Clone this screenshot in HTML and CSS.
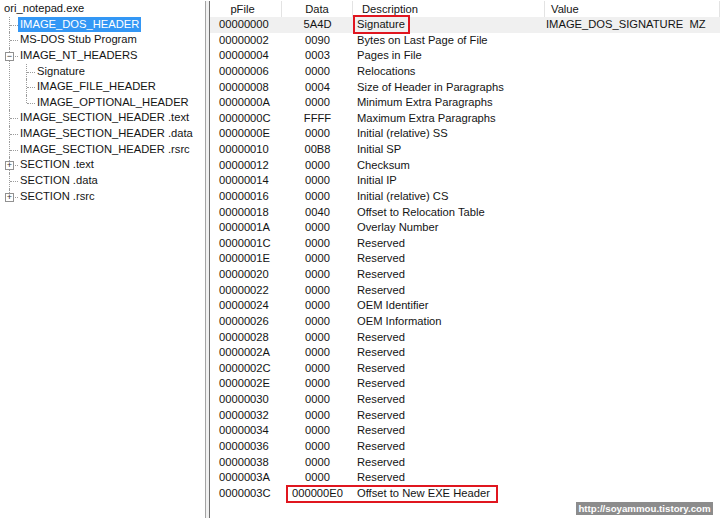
FILE: index.html
```html
<!DOCTYPE html>
<html>
    <head>
        <link rel="stylesheet" href="styles.css">
    </head>
    <body>
        <div class="window">
            <div class="treePane">
                <div class="root"><span class="label">ori_notepad.exe</span></div>
                <div class="branch">
                    <div class="node"><div class="line"><span class="label selected">IMAGE_DOS_HEADER</span></div></div>
                    <div class="node"><div class="line"><span class="label">MS-DOS Stub Program</span></div></div>
                    <div class="node">
                        <div class="line"><span class="toggle">&minus;</span><span class="label">IMAGE_NT_HEADERS</span></div>
                        <div class="branch sub">
                            <div class="node"><div class="line"><span class="label">Signature</span></div></div>
                            <div class="node"><div class="line"><span class="label">IMAGE_FILE_HEADER</span></div></div>
                            <div class="node last"><div class="line"><span class="label">IMAGE_OPTIONAL_HEADER</span></div></div>
                        </div>
                    </div>
                    <div class="node"><div class="line"><span class="label">IMAGE_SECTION_HEADER .text</span></div></div>
                    <div class="node"><div class="line"><span class="label">IMAGE_SECTION_HEADER .data</span></div></div>
                    <div class="node"><div class="line"><span class="label">IMAGE_SECTION_HEADER .rsrc</span></div></div>
                    <div class="node"><div class="line"><span class="toggle">+</span><span class="label">SECTION .text</span></div></div>
                    <div class="node"><div class="line"><span class="label">SECTION .data</span></div></div>
                    <div class="node last"><div class="line"><span class="toggle">+</span><span class="label">SECTION .rsrc</span></div></div>
                </div>
            </div>
            <div class="splitter"></div>
            <div class="listPane">
                <div class="head">
                    <div class="hFile">pFile</div>
                    <div class="hData">Data</div>
                    <div class="hDesc">Description</div>
                    <div class="hValue">Value</div>
                </div>
                <div class="row first">
                    <div class="cFile">00000000</div>
                    <div class="cData">5A4D</div>
                    <div class="cDesc"><span class="mark">Signature</span></div>
                    <div class="cValue">IMAGE_DOS_SIGNATURE  MZ</div>
                </div>
                <div class="row"><div class="cFile">00000002</div><div class="cData">0090</div><div class="cDesc">Bytes on Last Page of File</div><div class="cValue"></div></div>
                <div class="row"><div class="cFile">00000004</div><div class="cData">0003</div><div class="cDesc">Pages in File</div><div class="cValue"></div></div>
                <div class="row"><div class="cFile">00000006</div><div class="cData">0000</div><div class="cDesc">Relocations</div><div class="cValue"></div></div>
                <div class="row"><div class="cFile">00000008</div><div class="cData">0004</div><div class="cDesc">Size of Header in Paragraphs</div><div class="cValue"></div></div>
                <div class="row"><div class="cFile">0000000A</div><div class="cData">0000</div><div class="cDesc">Minimum Extra Paragraphs</div><div class="cValue"></div></div>
                <div class="row"><div class="cFile">0000000C</div><div class="cData">FFFF</div><div class="cDesc">Maximum Extra Paragraphs</div><div class="cValue"></div></div>
                <div class="row"><div class="cFile">0000000E</div><div class="cData">0000</div><div class="cDesc">Initial (relative) SS</div><div class="cValue"></div></div>
                <div class="row"><div class="cFile">00000010</div><div class="cData">00B8</div><div class="cDesc">Initial SP</div><div class="cValue"></div></div>
                <div class="row"><div class="cFile">00000012</div><div class="cData">0000</div><div class="cDesc">Checksum</div><div class="cValue"></div></div>
                <div class="row"><div class="cFile">00000014</div><div class="cData">0000</div><div class="cDesc">Initial IP</div><div class="cValue"></div></div>
                <div class="row"><div class="cFile">00000016</div><div class="cData">0000</div><div class="cDesc">Initial (relative) CS</div><div class="cValue"></div></div>
                <div class="row"><div class="cFile">00000018</div><div class="cData">0040</div><div class="cDesc">Offset to Relocation Table</div><div class="cValue"></div></div>
                <div class="row"><div class="cFile">0000001A</div><div class="cData">0000</div><div class="cDesc">Overlay Number</div><div class="cValue"></div></div>
                <div class="row"><div class="cFile">0000001C</div><div class="cData">0000</div><div class="cDesc">Reserved</div><div class="cValue"></div></div>
                <div class="row"><div class="cFile">0000001E</div><div class="cData">0000</div><div class="cDesc">Reserved</div><div class="cValue"></div></div>
                <div class="row"><div class="cFile">00000020</div><div class="cData">0000</div><div class="cDesc">Reserved</div><div class="cValue"></div></div>
                <div class="row"><div class="cFile">00000022</div><div class="cData">0000</div><div class="cDesc">Reserved</div><div class="cValue"></div></div>
                <div class="row"><div class="cFile">00000024</div><div class="cData">0000</div><div class="cDesc">OEM Identifier</div><div class="cValue"></div></div>
                <div class="row"><div class="cFile">00000026</div><div class="cData">0000</div><div class="cDesc">OEM Information</div><div class="cValue"></div></div>
                <div class="row"><div class="cFile">00000028</div><div class="cData">0000</div><div class="cDesc">Reserved</div><div class="cValue"></div></div>
                <div class="row"><div class="cFile">0000002A</div><div class="cData">0000</div><div class="cDesc">Reserved</div><div class="cValue"></div></div>
                <div class="row"><div class="cFile">0000002C</div><div class="cData">0000</div><div class="cDesc">Reserved</div><div class="cValue"></div></div>
                <div class="row"><div class="cFile">0000002E</div><div class="cData">0000</div><div class="cDesc">Reserved</div><div class="cValue"></div></div>
                <div class="row"><div class="cFile">00000030</div><div class="cData">0000</div><div class="cDesc">Reserved</div><div class="cValue"></div></div>
                <div class="row"><div class="cFile">00000032</div><div class="cData">0000</div><div class="cDesc">Reserved</div><div class="cValue"></div></div>
                <div class="row"><div class="cFile">00000034</div><div class="cData">0000</div><div class="cDesc">Reserved</div><div class="cValue"></div></div>
                <div class="row"><div class="cFile">00000036</div><div class="cData">0000</div><div class="cDesc">Reserved</div><div class="cValue"></div></div>
                <div class="row"><div class="cFile">00000038</div><div class="cData">0000</div><div class="cDesc">Reserved</div><div class="cValue"></div></div>
                <div class="row"><div class="cFile">0000003A</div><div class="cData">0000</div><div class="cDesc">Reserved</div><div class="cValue"></div></div>
                <div class="row lastRow">
                    <div class="cFile">0000003C</div>
                    <div class="cData">000000E0</div>
                    <div class="cDesc">Offset to New EXE Header</div>
                    <div class="cValue"></div>
                    <div class="wideMark"></div>
                </div>
            </div>
        </div>
        <div class="watermark">http://soyammou.tistory.com</div>
    </body>
</html>
```

FILE: styles.css
```css
body{
    margin: 0;
    background-color: white;
    font-family: "Liberation Sans", Arial, sans-serif;
    font-size: 11.2px;
    color: #141414;
}

.window{
    display: flex;
    width: 720px;
    height: 518px;
    padding-top: 1px;
    box-sizing: border-box;
    overflow: hidden;
}

/* tree on the left */

.treePane{
    width: 206px;
    padding-left: 2px;
    box-sizing: border-box;
    border-right: 1px solid #a3a3a3;
}

.root{
    height: 15.63px;
    line-height: 15.63px;
}

.label{
    display: inline-block;
    padding: 0 2px;
    height: 15.63px;
    line-height: 15.63px;
    white-space: nowrap;
}

.selected{
    background-color: #3397f5;
    color: white;
}

.branch{
    margin-left: 7px;
}

.branch.sub{
    margin-left: 8px;
}

.node{
    position: relative;
    padding-left: 9px;
}

.node::before{
    content: "";
    position: absolute;
    left: 0;
    top: 0;
    bottom: 0;
    border-left: 1px dotted #9c9c9c;
}

.node.last::before{
    bottom: auto;
    height: 8px;
}

.node::after{
    content: "";
    position: absolute;
    left: 1px;
    top: 8px;
    width: 8px;
    border-top: 1px dotted #9c9c9c;
}

.line{
    height: 15.63px;
}

.toggle{
    position: absolute;
    left: -4px;
    top: 4px;
    width: 7px;
    height: 7px;
    border: 1px solid #919191;
    background-color: white;
    font-size: 9px;
    line-height: 7px;
    text-align: center;
    color: #333;
    z-index: 1;
}

/* splitter */

.splitter{
    width: 3px;
    background-color: #f0f0f0;
    border-right: 1px solid #707070;
}

/* list on the right */

.listPane{
    flex: 1;
    position: relative;
}

.head, .row{
    display: grid;
    grid-template-columns: 72px 71px 192px 1fr;
    white-space: pre;
}

.head{
    height: 16px;
    line-height: 16px;
}

.head div{
    border-right: 1px solid #e3e3e3;
}

.hFile{
    text-align: center;
    padding-right: 6px;
}

.hData{
    text-align: center;
}

.hDesc{
    padding-left: 9px;
}

.hValue{
    padding-left: 6px;
}

.row{
    position: relative;
    height: 15.63px;
    line-height: 15.63px;
}

.row.first{
    background-color: #f0f0f0;
}

.cFile{
    padding-left: 9px;
}

.cData{
    text-align: center;
}

.cDesc{
    padding-left: 4px;
}

.cValue{
    padding-left: 1px;
}

.mark{
    outline: 2px solid #e0161f;
    outline-offset: 0;
    padding: 0 3px 0 2px;
    margin-left: -2px;
    display: inline-block;
    line-height: 15px;
}

.wideMark{
    position: absolute;
    left: 76px;
    top: -1px;
    width: 208px;
    height: 14px;
    border: 2px solid #e0161f;
}

.watermark{
    position: absolute;
    left: 576px;
    top: 502px;
    width: 137px;
    height: 13px;
    line-height: 13px;
    background-color: #8c8c8c;
    color: white;
    font-weight: bold;
    font-size: 9.7px;
    text-align: center;
}
```
